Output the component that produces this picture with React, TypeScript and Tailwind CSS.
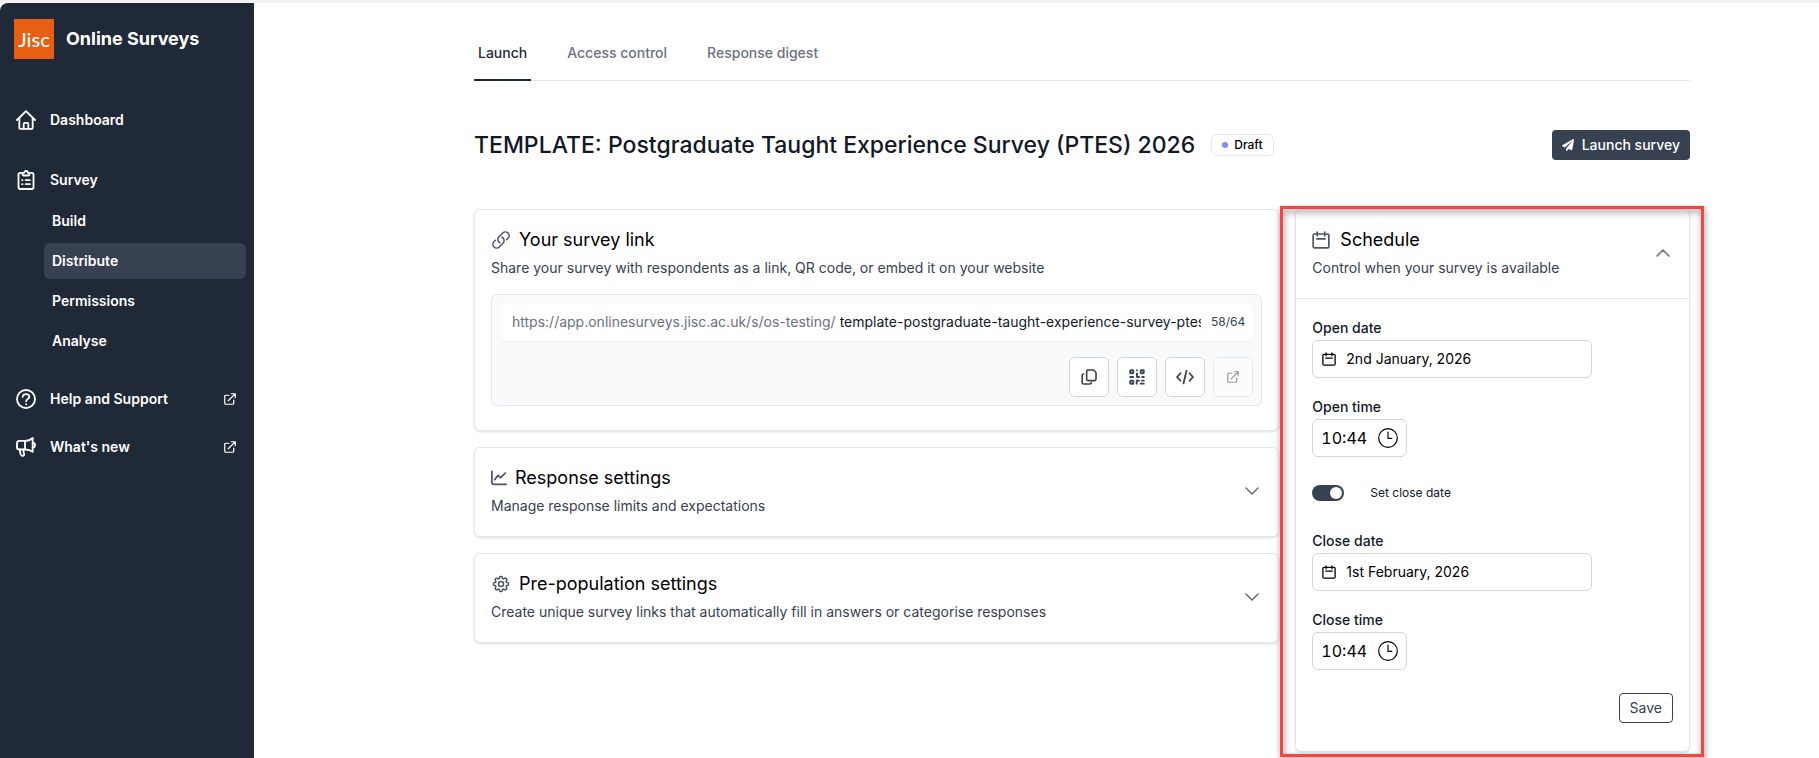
import { ReactNode, useState } from "react";
import { FaPaperPlane } from "react-icons/fa";
import { HiOutlineCog8Tooth, HiOutlineLink } from "react-icons/hi2";
import { ChevronDown, ChevronUp } from "lucide-react";
import clsx from "clsx";

type IconProps = { className?: string };

function Svg({
    className,
    width = 2,
    children,
}: IconProps & { width?: number; children: ReactNode }) {
    return (
        <svg
            viewBox="0 0 24 24"
            fill="none"
            stroke="currentColor"
            strokeWidth={width}
            strokeLinecap="round"
            strokeLinejoin="round"
            className={className}
            aria-hidden="true"
        >
            {children}
        </svg>
    );
}

const HomeIcon = ({ className }: IconProps) => (
    <Svg className={className} width={2.2}>
        <path d="M1.2 12 12 1.4 22.8 12" />
        <path d="M4 10v11.2a1.4 1.4 0 0 0 1.4 1.4h13.2a1.4 1.4 0 0 0 1.4-1.4V10" />
        <path d="M9.2 22.4v-5.6a1.4 1.4 0 0 1 1.4-1.4h2.8a1.4 1.4 0 0 1 1.4 1.4v5.6" />
    </Svg>
);

const ClipboardIcon = ({ className }: IconProps) => (
    <Svg className={className} width={2.2}>
        <path d="M7.6 3.4H5a2 2 0 0 0-2 2v15.4a2 2 0 0 0 2 2h14a2 2 0 0 0 2-2V5.4a2 2 0 0 0-2-2h-2.6" />
        <path d="M7.8 3.4h2a2.2 2.2 0 0 1 4.400 0h2v1.800a1.400 1.400 0 0 1-1.400 1.400H9.200a1.400 1.400 0 0 1-1.400-1.400z" />
        <path d="M7.4 12.200h.4M11.600 12.200h5M7.400 17h.4M11.600 17h5" />
    </Svg>
);

const HelpIcon = ({ className }: IconProps) => (
    <Svg className={className} width={2.2}>
        <circle cx="12" cy="12" r="10.800" />
        <path d="M8 9.400c.3-2 1.900-3.200 4-3.200 2.300 0 4 1.300 4 3.300 0 2.400-3.800 2.700-3.800 5.100" />
        <path d="M12.200 18.200v.1" />
    </Svg>
);

const MegaphoneIcon = ({ className }: IconProps) => (
    <Svg className={className} width={2.2}>
        <path d="M10.800 4.600H4a2.800 2.800 0 0 0-2.800 2.800v4.800A2.800 2.800 0 0 0 4 15h6.800z" />
        <path d="M10.800 4.600c4 0 6.800-1 9.200-3.400v16.600c-2.400-2-5.200-2.800-9.200-2.800" />
        <path d="M20 7.200c1.800 0 2.800 1 2.800 2.600s-1 2.600-2.800 2.600" />
        <path d="M4.600 15c0 3 .5 5.200 1.700 7 .7 1 3.900.6 3.600-1-.3-1.300-1.100-2.300-.9-6" />
    </Svg>
);

const ExternalIcon = ({ className }: IconProps) => (
    <Svg className={className} width={2.4}>
        <path d="M10 4.500H3.500a2 2 0 0 0-2 2v14a2 2 0 0 0 2 2h14a2 2 0 0 0 2-2V14" />
        <path d="M14.500 1.500h8v8M22 2 8.500 15.500" />
    </Svg>
);

const CalendarIcon = ({ className }: IconProps) => (
    <Svg className={className} width={2.2}>
        <rect x="1.500" y="4" width="21" height="18.500" rx="2" />
        <path d="M7 1.500v5M17 1.500v5M6.500 10.500h11" />
    </Svg>
);

const ChartIcon = ({ className }: IconProps) => (
    <Svg className={className} width={2.6}>
        <path d="M1.300 2v16.500a3 3 0 0 0 3 3h18.400" />
        <path d="m5.500 14.500 5-6.500 4 3.500 7-7" />
    </Svg>
);

const CopyIcon = ({ className }: IconProps) => (
    <Svg className={className} width={2.4}>
        <path d="M10.500 1.500h8.300l3.700 3.800v10.200a2 2 0 0 1-2 2h-10a2 2 0 0 1-2-2v-12a2 2 0 0 1 2-2z" />
        <path d="M3.800 7.500a2 2 0 0 0-2 2v11a2 2 0 0 0 2 2h9.700a2 2 0 0 0 2-2" />
    </Svg>
);

const QrIcon = ({ className }: IconProps) => (
    <Svg className={className} width={2.8}>
        <rect x="1.800" y="1.800" width="4.600" height="4.600" rx="1" />
        <rect x="17.600" y="1.800" width="4.600" height="4.600" rx="1" />
        <rect x="1.800" y="17.600" width="4.600" height="4.600" rx="1" />
        <path d="M12 1.800v.1M12 6.500v5.500h3M1.800 12h4.500M20 12h2.200M11.500 22v-4.500h3.500M19.500 17.500h2.700M17.500 22h4.700" />
    </Svg>
);

const CodeIcon = ({ className }: IconProps) => (
    <Svg className={className} width={2.4}>
        <path d="M6 7 1.400 12 6 17M18 7l4.600 5-4.600 5M14 3.500l-4 17" />
    </Svg>
);

const ClockIcon = ({ className }: IconProps) => (
    <Svg className={className} width={1.4}>
        <circle cx="12" cy="12" r="11.200" />
        <path d="M12 5v7.500h4.500" />
    </Svg>
);

const surveyPages = ["Build", "Distribute", "Permissions", "Analyse"];
const tabs = ["Launch", "Access control", "Response digest"];

function Sidebar() {
    return (
        <aside className="w-[254px] shrink-0 rounded-tl-lg bg-[#1f2937] text-sm font-semibold text-white">
            <div className="flex items-center gap-3 px-3.5 pt-4">
                <div className="flex h-10 w-10 items-center justify-center bg-[#e85e13] font-[Lato] text-xl font-medium">
                    Jisc
                </div>
                <span className="text-lg font-bold">Online Surveys</span>
            </div>
            <nav className="pt-[43px]">
                <a href="#" className="flex h-9 items-center gap-3.5 px-4">
                    <HomeIcon className="h-5 w-5" />
                    Dashboard
                </a>
                <a href="#" className="mt-6 flex h-9 items-center gap-3.5 px-4">
                    <ClipboardIcon className="h-5 w-5" />
                    Survey
                </a>
                <ul className="mt-[5px] mr-2 ml-11 space-y-1">
                    {surveyPages.map((page) => (
                        <li key={page}>
                            <a
                                href="#"
                                className={clsx(
                                    "flex h-9 items-center rounded-md px-2",
                                    page === "Distribute" && "bg-[#374151]"
                                )}
                            >
                                {page}
                            </a>
                        </li>
                    ))}
                </ul>
                <a
                    href="#"
                    className="mt-[22px] flex h-9 items-center gap-3.5 pr-[18px] pl-4"
                >
                    <HelpIcon className="h-5 w-5" />
                    <span className="flex-1">Help and Support</span>
                    <ExternalIcon className="h-3 w-3" />
                </a>
                <a
                    href="#"
                    className="mt-3 flex h-9 items-center gap-3.5 pr-[18px] pl-4"
                >
                    <MegaphoneIcon className="h-5 w-5" />
                    <span className="flex-1">What's new</span>
                    <ExternalIcon className="h-3 w-3" />
                </a>
            </nav>
        </aside>
    );
}

type CardHeaderProps = {
    icon: ReactNode;
    title: string;
    text: string;
    action?: ReactNode;
};

function CardHeader({ icon, title, text, action }: CardHeaderProps) {
    return (
        <div className="flex items-center justify-between px-4 pt-4 pb-[18px]">
            <div>
                <h2 className="flex items-center gap-2 text-lg text-black">
                    {icon}
                    {title}
                </h2>
                <p className="mt-0.5 text-sm leading-6 text-[#374151]">{text}</p>
            </div>
            {action}
        </div>
    );
}

function Card({ children }: { children: ReactNode }) {
    return (
        <section className="rounded-md border border-[#e5e7eb] bg-white shadow-sm">
            {children}
        </section>
    );
}

function SurveyLink() {
    const [slug, setSlug] = useState(
        "template-postgraduate-taught-experience-survey-ptes-2026-1"
    );
    const button =
        "flex h-10 w-10 items-center justify-center rounded-md border border-[#d1d5db] bg-white text-[#374151]";

    return (
        <Card>
            <CardHeader
                icon={
                    <HiOutlineLink
                        className="h-5 w-5 text-[#4b5563]"
                        strokeWidth={1.8}
                    />
                }
                title="Your survey link"
                text="Share your survey with respondents as a link, QR code, or embed it on your website"
            />
            <div className="mx-4 -mt-1 mb-6 rounded-md border border-[#e5e7eb] bg-[#f9fafb] p-2">
                <div className="flex h-[38px] items-center rounded-md bg-white pr-2 pl-3 text-sm shadow-xs">
                    <label htmlFor="slug" className="text-[#6b7280]">
                        https://app.onlinesurveys.jisc.ac.uk/s/os-testing/
                    </label>
                    <input
                        id="slug"
                        className="ml-1 min-w-0 flex-1 text-[#111827] outline-none"
                        value={slug}
                        onChange={(e) => setSlug(e.target.value)}
                    />
                    <span className="ml-2.5 text-xs text-[#374151]">
                        {slug.length}/64
                    </span>
                </div>
                <div className="mt-4 flex justify-end gap-2">
                    <button className={button} aria-label="Copy link">
                        <CopyIcon className="h-4 w-4" />
                    </button>
                    <button className={button} aria-label="QR code">
                        <QrIcon className="h-4 w-4" />
                    </button>
                    <button className={button} aria-label="Embed">
                        <CodeIcon className="h-[18px] w-[18px]" />
                    </button>
                    <button
                        className={clsx(button, "opacity-50")}
                        aria-label="Open survey"
                        disabled
                    >
                        <ExternalIcon className="h-3 w-3" />
                    </button>
                </div>
            </div>
        </Card>
    );
}

function DateField({ id, label, value }: { id: string; label: string; value: string }) {
    return (
        <div>
            <label htmlFor={id} className="block text-sm leading-6 font-medium text-[#111827]">
                {label}
            </label>
            <div className="flex h-[38px] w-[280px] items-center gap-2.5 rounded-md border border-[#d1d5db] px-[9px] text-black">
                <CalendarIcon className="h-3.5 w-3.5 shrink-0" />
                <input id={id} defaultValue={value} className="min-w-0 flex-1 text-sm outline-none" />
            </div>
        </div>
    );
}

function TimeField({ id, label }: { id: string; label: string }) {
    return (
        <div>
            <label htmlFor={id} className="block text-sm leading-6 font-medium text-[#111827]">
                {label}
            </label>
            <div className="flex h-[38px] w-[95px] items-center rounded-md border border-[#d1d5db] px-2 text-black">
                <input id={id} defaultValue="10:44" className="min-w-0 flex-1 tabular-nums outline-none" />
                <ClockIcon className="h-5 w-5 shrink-0" />
            </div>
        </div>
    );
}

function Schedule() {
    return (
        <Card>
            <CardHeader
                icon={<CalendarIcon className="mr-0.5 h-[18px] w-[18px] text-[#4b5563]" />}
                title="Schedule"
                text="Control when your survey is available"
                action={
                    <button aria-label="Collapse schedule" className="-mr-0.5">
                        <ChevronUp className="h-6 w-6 text-[#6b7280]" strokeWidth={1.6} />
                    </button>
                }
            />
            <form
                className="space-y-[17px] border-t border-[#e5e7eb] px-4 pt-[17px] pb-7"
                onSubmit={(e) => e.preventDefault()}
            >
                <DateField id="open-date" label="Open date" value="2nd January, 2026" />
                <TimeField id="open-time" label="Open time" />
                <label className="my-7 flex h-4 items-center text-xs text-[#111827]">
                    <input type="checkbox" role="switch" defaultChecked className="peer sr-only" />
                    <span className="mr-[26px] flex h-4 w-8 items-center rounded-full bg-[#9ca3af] p-0.5 peer-checked:justify-end peer-checked:bg-[#374151]">
                        <span className="h-3 w-3 rounded-full bg-white" />
                    </span>
                    Set close date
                </label>
                <DateField id="close-date" label="Close date" value="1st February, 2026" />
                <TimeField id="close-time" label="Close time" />
                <div className="flex justify-end pt-1.5">
                    <button className="h-[30px] rounded-sm border border-[#374151] px-2.5 text-sm text-[#374151]">
                        Save
                    </button>
                </div>
            </form>
        </Card>
    );
}

export default function App() {
    const expand = (
        <button aria-label="Expand" className="-mr-0.5">
            <ChevronDown className="h-6 w-6 text-[#6b7280]" strokeWidth={1.6} />
        </button>
    );

    return (
        <div className="flex min-h-screen border-t-3 border-[#f3f3f3] bg-white font-[Inter,sans-serif]">
            <Sidebar />
            <main className="min-w-0 flex-1 pl-[91px]">
                <div className="mx-auto max-w-7xl px-8">
                    <nav className="flex gap-8 border-b border-[#e5e7eb] pt-7 text-sm font-medium">
                        {tabs.map((tab, i) => (
                            <a
                                key={tab}
                                href="#"
                                className={clsx(
                                    "-mb-px border-b-2 px-1 pt-3 pb-4",
                                    i === 0
                                        ? "border-[#1f2937] text-[#1f2937]"
                                        : "border-transparent text-[#6b7280]"
                                )}
                            >
                                {tab}
                            </a>
                        ))}
                    </nav>

                    <header className="mt-12 flex items-center justify-between">
                        <div className="flex items-center gap-4">
                            <h1 className="text-[23px] leading-8 font-medium text-[#111827]">
                                TEMPLATE: Postgraduate Taught Experience Survey (PTES) 2026
                            </h1>
                            <span className="flex items-center gap-1.5 rounded-md border border-[#e5e7eb] px-2.5 py-0.5 text-xs font-medium text-black">
                                <span className="h-1.5 w-1.5 rounded-full bg-[#818cf8]" />
                                Draft
                            </span>
                        </div>
                        <button className="flex h-[30px] items-center gap-2 rounded-sm bg-[#374151] px-2.5 text-sm font-medium text-white">
                            <FaPaperPlane className="h-3 w-3" />
                            Launch survey
                        </button>
                    </header>

                    <div className="mt-12 grid grid-cols-3 items-start gap-4">
                        <div className="col-span-2 space-y-4">
                            <SurveyLink />
                            <Card>
                                <CardHeader
                                    icon={<ChartIcon className="h-4 w-4 text-[#4b5563]" />}
                                    title="Response settings"
                                    text="Manage response limits and expectations"
                                    action={expand}
                                />
                            </Card>
                            <Card>
                                <CardHeader
                                    icon={
                                        <HiOutlineCog8Tooth
                                            className="h-5 w-5 text-[#4b5563]"
                                            strokeWidth={1.8}
                                        />
                                    }
                                    title="Pre-population settings"
                                    text="Create unique survey links that automatically fill in answers or categorise responses"
                                    action={expand}
                                />
                            </Card>
                        </div>
                        <div className="relative">
                            <Schedule />
                            <div className="pointer-events-none absolute -top-[3px] -right-3.5 -bottom-[5px] -left-[15px] border-3 border-[#fc4141] drop-shadow-[1px_3px_3px_rgba(0,0,0,0.5)]" />
                        </div>
                    </div>
                </div>
            </main>
        </div>
    );
}
